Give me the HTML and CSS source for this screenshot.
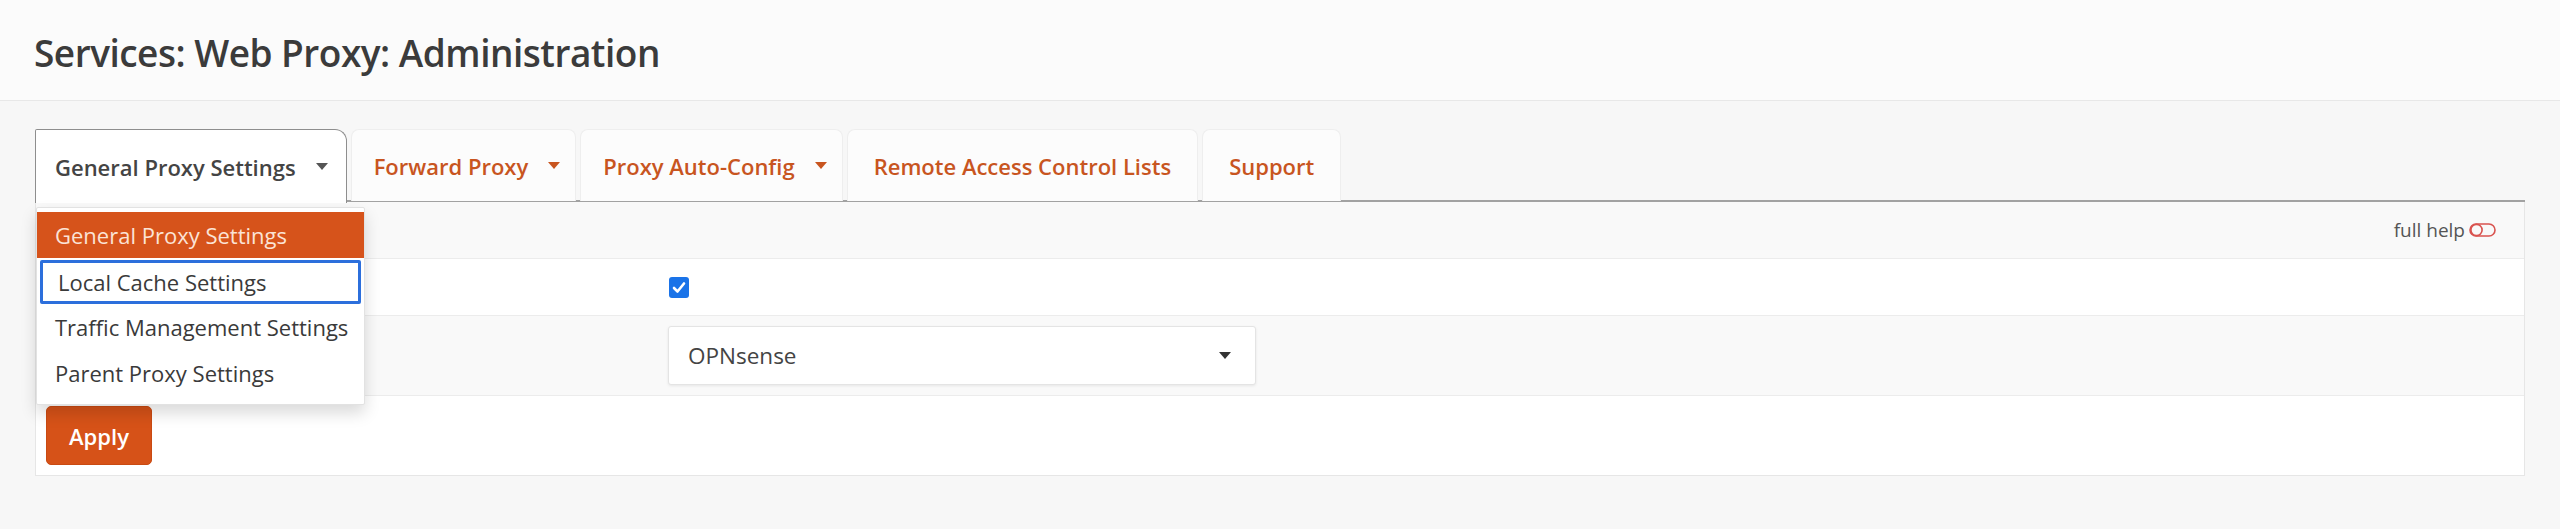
FILE: index.html
```html
<!doctype html>
<html lang="en">
<head>
    <meta http-equiv="Content-Type" content="text/html; charset=utf-8" />
    <title>Services: Web Proxy: Administration</title>
    <link rel="stylesheet" href="styles.css">
</head>
<body>
    <header class="page-head">
        <h1>Services: Web Proxy: Administration</h1>
    </header>
    <main class="page-body">
        <ul class="tabs">
            <li class="tab active">
                <a>General Proxy Settings <span class="caret"></span></a>
                <ul class="menu">
                    <li class="selected">General Proxy Settings</li>
                    <li class="focused">Local Cache Settings</li>
                    <li>Traffic Management Settings</li>
                    <li>Parent Proxy Settings</li>
                </ul>
            </li>
            <li class="tab has-menu"><a>Forward Proxy <span class="caret"></span></a></li>
            <li class="tab has-menu"><a>Proxy Auto-Config <span class="caret"></span></a></li>
            <li class="tab"><a>Remote Access Control Lists</a></li>
            <li class="tab"><a>Support</a></li>
        </ul>
        <div class="panel">
            <div class="row row-head">
                <span class="help">full help
                    <svg class="toggle" width="28" height="14" viewBox="0 0 28 14">
                        <rect x="1" y="1" width="25" height="12" rx="6" fill="none" stroke="#d9534f" stroke-width="1.6"/>
                        <circle cx="7.5" cy="7" r="5.6" fill="none" stroke="#d9534f" stroke-width="1.6"/>
                    </svg>
                </span>
            </div>
            <div class="row row-check">
                <div class="label"></div>
                <div class="field">
                    <span class="checkbox">
                        <svg width="20" height="21" viewBox="0 0 20 21">
                            <rect x="0" y="0" width="20" height="21" rx="3" fill="#1a73e8"/>
                            <path d="M5 11 L8.5 14.5 L15 6.5" fill="none" stroke="#fff" stroke-width="2.6" stroke-linecap="round" stroke-linejoin="round"/>
                        </svg>
                    </span>
                </div>
            </div>
            <div class="row row-select">
                <div class="label"></div>
                <div class="field">
                    <div class="select">OPNsense <span class="caret dark"></span></div>
                </div>
            </div>
            <div class="row row-actions">
                <button class="btn-apply">Apply</button>
            </div>
        </div>
    </main>
</body>
</html>
```

FILE: styles.css
```css
*{ padding:0; margin:0; list-style:none; box-sizing:border-box;}
body
{
    background:#f7f7f7;
    font-family:"Open Sans", "Noto Sans", sans-serif;
    color:#3d3d3d;
}
.page-head
{
    height:101px;
    background:#fbfbfb;
    border-bottom:1px solid #e8e8e8;
    padding:0 34px;
    display:flex;
    align-items:center;
}
.page-head h1
{
    font-size:37px;
    font-weight:600;
    color:#3b3b3b;
    letter-spacing:-0.5px;
    padding-top:4px;
}
.page-body
{
    padding:28px 35px 0 35px;
}
.tabs
{
    display:flex;
    gap:4px;
    border-bottom:2px solid #a2a2a2;
    height:73px;
}
.tab
{
    position:relative;
    height:72px;
    background:#fcfcfc;
    border:1px solid #eeeeee;
    border-bottom:0;
    border-radius:8px 8px 0 0;
}
.tab a
{
    display:flex;
    align-items:center;
    height:100%;
    padding:0 26px 0 26px;
    font-size:22px;
    font-weight:600;
    color:#c8551f;
    white-space:nowrap;
}
.tab.has-menu a
{
    padding:0 15px 0 22px;
}
.tab.active
{
    background:#fff;
    border:1px solid #8e8e8e;
    border-bottom:0;
    border-radius:2px 12px 0 0;
    height:74px;
    margin-bottom:-2px;
}
.tab.active a
{
    color:#444;
    padding:0 18px 0 19px;
}
.caret
{
    display:inline-block;
    margin-left:20px;
    border-top:7px solid #c8551f;
    border-left:6px solid transparent;
    border-right:6px solid transparent;
}
.tab.active .caret
{
    border-top-color:#555;
}
.caret.dark
{
    border-top-color:#333;
    margin-left:auto;
}
.menu
{
    position:absolute;
    left:0;
    top:77px;
    width:329px;
    padding:4px 0 8px 0;
    background:#fff;
    border:1px solid #e2e2e2;
    border-radius:2px;
    box-shadow:0 8px 16px rgba(0,0,0,0.15);
    z-index:5;
}
.menu li
{
    height:46px;
    display:flex;
    align-items:center;
    padding-left:18px;
    font-size:22px;
    color:#3a3a3a;
    white-space:nowrap;
}
.menu li.selected
{
    background:#d6531b;
    color:#fbe3d6;
}
.menu li.focused
{
    margin:2px 3px 0 3px;
    padding-left:15px;
    height:44px;
    border:3px solid #2c6fdc;
    border-radius:2px;
}
.panel
{
    background:#fff;
    border:1px solid #e6e6e6;
    border-top:0;
}
.row
{
    display:flex;
    align-items:center;
    border-bottom:1px solid #ececec;
}
.row:last-child
{
    border-bottom:0;
}
.row-head
{
    height:57px;
    background:#f9f9f9;
    justify-content:flex-end;
    padding-right:27px;
}
.help
{
    display:flex;
    align-items:center;
    gap:4px;
    font-size:19px;
    color:#555;
}
.row-check
{
    height:57px;
}
.row-select
{
    height:80px;
    background:#f9f9f9;
}
.label
{
    width:632px;
}
.checkbox
{
    display:block;
    height:21px;
    margin-left:1px;
}
.select
{
    width:588px;
    height:59px;
    background:#fff;
    border:1px solid #e4e4e4;
    border-radius:3px;
    box-shadow:0 1px 3px rgba(0,0,0,0.08);
    display:flex;
    align-items:center;
    padding:0 24px 0 19px;
    font-size:22.5px;
    color:#444;
}
.row-actions
{
    height:79px;
    padding-left:10px;
}
.btn-apply
{
    width:106px;
    height:59px;
    background:#d65218;
    border:1px solid #c94a12;
    border-radius:5px;
    color:#fff;
    font-family:"Open Sans", "Noto Sans", sans-serif;
    font-size:22px;
    font-weight:600;
}
```
